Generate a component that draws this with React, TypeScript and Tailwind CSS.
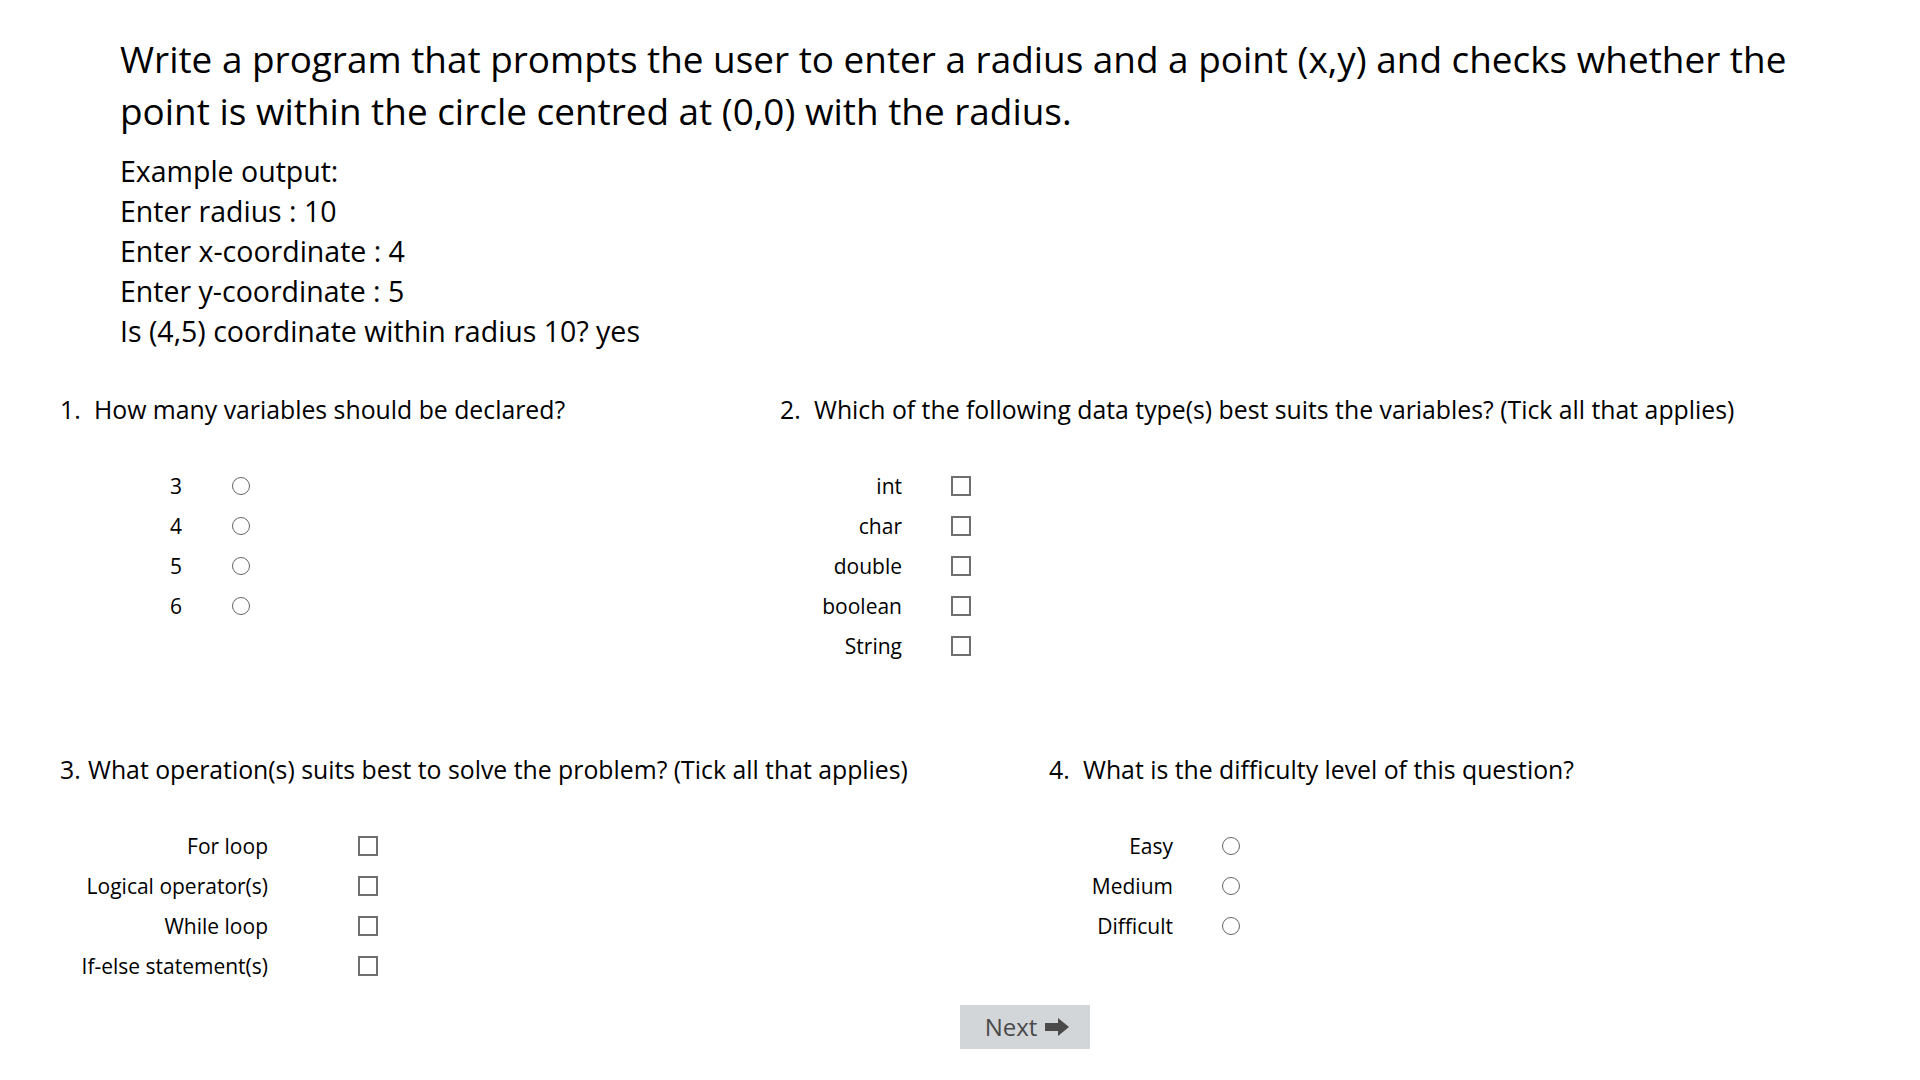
import React from "react";

const font = { fontFamily: '"Open Sans", "Noto Sans", sans-serif' };

const Radio = () => (
    <span className="block w-[18px] h-[18px] rounded-full border border-[#666] bg-white" />
);

const Checkbox = () => (
    <span className="block w-[20px] h-[20px] border-2 border-[#6f6f6f] bg-white" />
);

interface OptionListProps {
    items: string[];
    kind: "radio" | "checkbox";
    labelWidth: string;
    gap: string;
}

const OptionList = ({ items, kind, labelWidth, gap }: OptionListProps) => (
    <div className="flex flex-col">
        {items.map((item) => (
            <div key={item} className={`flex items-center h-[40px] ${gap}`}>
                <span className={`${labelWidth} text-right text-[21px] leading-[40px] text-black`}>
                    {item}
                </span>
                {kind === "radio" ? <Radio /> : <Checkbox />}
            </div>
        ))}
    </div>
);

const Heading = ({ num, text, wide }: { num: string; text: string; wide?: boolean }) => (
    <div className="flex h-[32px] items-center text-[24.8px] leading-[32px] text-black">
        <span className={wide ? "w-[34px]" : "w-[28px]"}>{num}</span>
        <span>{text}</span>
    </div>
);

export default function App() {
    return (
        <div className="w-full min-h-screen bg-white text-black" style={font}>
            <div className="pl-[120px] pr-[100px] pt-[33px]">
                <p className="text-[36.9px] leading-[52px]">
                    Write a program that prompts the user to enter a radius and a point (x,y) and checks whether the
                    point is within the circle centred at (0,0) with the radius.
                </p>
                <div className="mt-[14px] text-[28.5px] leading-[40px]">
                    <p>Example output:</p>
                    <p>Enter radius : 10</p>
                    <p>Enter x-coordinate : 4</p>
                    <p>Enter y-coordinate : 5</p>
                    <p>Is (4,5) coordinate within radius 10? yes</p>
                </div>
            </div>

            <div className="flex mt-[42px] pl-[60px]">
                <div className="w-[720px] flex flex-col gap-[41px]">
                    <Heading num="1." text="How many variables should be declared?" wide />
                    <OptionList
                        items={["3", "4", "5", "6"]}
                        kind="radio"
                        labelWidth="w-[122px]"
                        gap="gap-[50px]"
                    />
                </div>
                <div className="flex flex-col gap-[41px]">
                    <Heading
                        num="2."
                        text="Which of the following data type(s) best suits the variables? (Tick all that applies)"
                        wide
                    />
                    <OptionList
                        items={["int", "char", "double", "boolean", "String"]}
                        kind="checkbox"
                        labelWidth="w-[122px]"
                        gap="gap-[49px]"
                    />
                </div>
            </div>

            <div className="flex mt-[87px] pl-[60px]">
                <div className="w-[989px] flex flex-col gap-[41px]">
                    <Heading
                        num="3."
                        text="What operation(s) suits best to solve the problem? (Tick all that applies)"
                    />
                    <OptionList
                        items={["For loop", "Logical operator(s)", "While loop", "If-else statement(s)"]}
                        kind="checkbox"
                        labelWidth="w-[208px]"
                        gap="gap-[90px]"
                    />
                </div>
                <div className="flex flex-col gap-[41px]">
                    <Heading num="4." text="What is the difficulty level of this question?" wide />
                    <OptionList
                        items={["Easy", "Medium", "Difficult"]}
                        kind="radio"
                        labelWidth="w-[124px]"
                        gap="gap-[49px]"
                    />
                </div>
            </div>

            <div className="mt-[19px] pl-[960px]">
                <button className="flex items-center justify-center gap-[8px] w-[130px] h-[44px] pl-[4px] bg-[#d3d6d9] text-[#4a4a4a] text-[24px]">
                    <span>Next</span>
                    <svg width="24" height="18" viewBox="0 0 24 18" fill="#4a4a4a">
                        <path d="M0 5h13V0l11 9-11 9v-5H0z" />
                    </svg>
                </button>
            </div>
        </div>
    );
}
